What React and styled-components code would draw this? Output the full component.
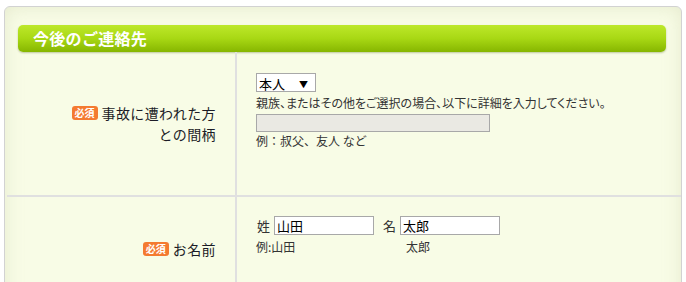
import React from 'react';
import styled, { createGlobalStyle } from 'styled-components';

const GlobalStyle = createGlobalStyle`
  html, body {
    margin: 0;
    padding: 0;
    background: #ffffff;
  }
  body {
    font-family: "Noto Sans CJK JP", "Noto Sans", sans-serif;
    color: #333;
  }
`;

const Panel = styled.div`
  margin: 6px 4px 0 4px;
  border: 1px solid #d2d2d2;
  border-radius: 6px;
  background: #f8fce6;
  box-shadow: inset 0 0 18px rgba(196, 204, 160, 0.35);
  padding-top: 18px;
  height: 300px;
  overflow: hidden;
`;

const SectionHeader = styled.h2`
  margin: 0 15px 0 13px;
  height: 27px;
  border-radius: 5px;
  background: linear-gradient(to bottom, #bde82a 0%, #a8d814 50%, #86b600 100%);
  box-shadow: 0 1px 2px rgba(80, 100, 20, 0.35);
  color: #fff;
  font-size: 16px;
  font-weight: bold;
  line-height: 27px;
  padding-left: 15px;
  letter-spacing: 0.3px;
`;

const Table = styled.div`
  margin-left: 2px;
`;

const Row = styled.div`
  display: grid;
  grid-template-columns: 230px 1fr;
  border-bottom: ${(p) => (p.last ? 'none' : '2px solid #e0e0e0')};
  min-height: ${(p) => p.height}px;
`;

const LabelCell = styled.div`
  border-right: 2px solid #e0e0e0;
  display: flex;
  align-items: center;
  justify-content: flex-end;
  padding-right: 19px;
  text-align: right;
  font-size: 14px;
  letter-spacing: 0.4px;
  line-height: 21px;
  color: #1c1c26;
`;

const Badge = styled.span`
  display: inline-block;
  background: #f47a30;
  color: #fff;
  font-size: 10px;
  font-weight: bold;
  letter-spacing: 0;
  line-height: 14px;
  height: 14px;
  padding: 0 3px;
  border-radius: 3px;
  margin-right: 4px;
  vertical-align: 2px;
`;

const FieldCell = styled.div`
  padding: ${(p) => p.top}px 20px 0 19px;
  font-size: 12px;
  line-height: 18px;
  color: #333;
`;

const SelectWrap = styled.div`
  position: relative;
  width: 60px;
  height: 19px;
`;

const Select = styled.select`
  appearance: none;
  width: 60px;
  height: 19px;
  border: 1px solid #a8a8a8;
  background: #fff;
  font-family: inherit;
  font-size: 13px;
  padding: 0 0 0 2px;
  color: #000;
  border-radius: 0;
`;

const Arrow = styled.span`
  position: absolute;
  right: 8px;
  top: 3px;
  font-size: 9px;
  color: #000;
  pointer-events: none;
`;

const Note = styled.div`
  margin-top: ${(p) => p.mt || 0}px;
  font-feature-settings: ${(p) => (p.tight ? '"palt"' : 'normal')};
`;

const WideInput = styled.input`
  display: block;
  width: 234px;
  height: 18px;
  box-sizing: border-box;
  border: 1px solid #a8a8a8;
  background: #eae9e3;
  margin-top: 2px;
`;

const NameRow = styled.div`
  display: flex;
  align-items: center;
  font-size: 13px;
`;

const NameLabel = styled.span`
  margin: 0 ${(p) => p.gap}px 0 ${(p) => p.left || 0}px;
`;

const NameInput = styled.input`
  width: 100px;
  height: 19px;
  box-sizing: border-box;
  border: 1px solid #a8a8a8;
  background: #fff;
  font-family: inherit;
  font-size: 13px;
  padding: 0 2px;
  color: #000;
`;

const ExampleRow = styled.div`
  display: flex;
  margin-top: 3px;
  font-size: 12px;
`;

const ExampleItem = styled.span`
  width: ${(p) => p.width}px;
`;

export default function App() {
  return (
    <>
      <GlobalStyle />
      <Panel>
        <SectionHeader>今後のご連絡先</SectionHeader>
        <Table>
          <Row height={143}>
            <LabelCell>
              <div>
                <Badge>必須</Badge>事故に遭われた方
                <br />
                との間柄
              </div>
            </LabelCell>
            <FieldCell top={21}>
              <SelectWrap>
                <Select defaultValue="本人">
                  <option>本人</option>
                  <option>親族</option>
                  <option>その他</option>
                </Select>
                <Arrow>▼</Arrow>
              </SelectWrap>
              <Note mt={2} tight>親族、またはその他をご選択の場合、以下に詳細を入力してください。</Note>
              <WideInput disabled />
              <Note>例：叔父、友人 など</Note>
            </FieldCell>
          </Row>
          <Row height={104} last>
            <LabelCell>
              <div>
                <Badge>必須</Badge>お名前
              </div>
            </LabelCell>
            <FieldCell top={19}>
              <NameRow>
                <NameLabel gap={4} left={1}>姓</NameLabel>
                <NameInput defaultValue="山田" />
                <NameLabel gap={4} left={9}>名</NameLabel>
                <NameInput defaultValue="太郎" />
              </NameRow>
              <ExampleRow>
                <ExampleItem width={150}>例:山田</ExampleItem>
                <ExampleItem>太郎</ExampleItem>
              </ExampleRow>
            </FieldCell>
          </Row>
        </Table>
      </Panel>
    </>
  );
}
